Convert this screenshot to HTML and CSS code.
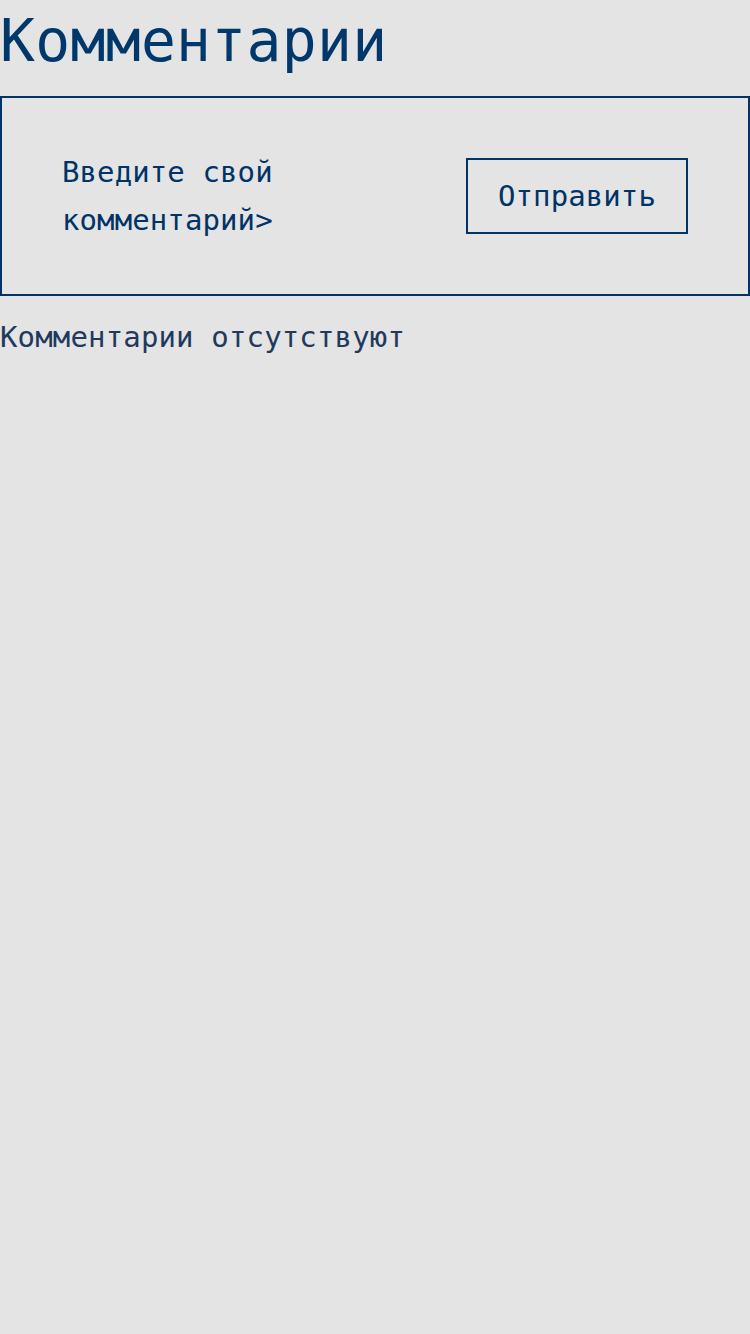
FILE: index.html
```html
<!DOCTYPE html>
<html lang="ru">
<head>
<meta charset="utf-8">
<title>Комментарии</title>
<link rel="stylesheet" href="styles.css">
</head>
<body>
<h1 class="title">Комментарии</h1>
<form class="comment-form">
  <div class="comment-input" contenteditable="true">Введите свой комментарий&gt;</div>
  <button type="button" class="send-btn">Отправить</button>
</form>
<p class="empty">Комментарии отсутствуют</p>
</body>
</html>
```

FILE: styles.css
```css
html, body {
  margin: 0;
  padding: 0;
  background: #e4e4e4;
}
body {
  font-family: "DejaVu Sans Mono", monospace;
  color: #003366;
}
.title {
  margin: 7px 0 21px;
  font-size: 58px;
  font-weight: normal;
  line-height: 68px;
  letter-spacing: 0.3px;
  color: #00386b;
}
.comment-form {
  display: flex;
  align-items: center;
  justify-content: space-between;
  border: 2px solid #003366;
  padding: 50px 60px;
  margin: 0;
}
.comment-input {
  flex: 1;
  font-size: 29px;
  letter-spacing: 0.1px;
  line-height: 48px;
  color: #003366;
  outline: none;
  margin-right: 24px;
}
.send-btn {
  font-family: "DejaVu Sans Mono", monospace;
  font-size: 29px;
  letter-spacing: 0.1px;
  color: #003366;
  background: transparent;
  border: 2px solid #003366;
  padding: 0 30px;
  height: 76px;
  margin: 0;
  cursor: pointer;
}
.empty {
  margin: 24px 0 0;
  font-size: 29px;
  letter-spacing: 0.15px;
  line-height: 34px;
  color: #1f3a5c;
}
```
